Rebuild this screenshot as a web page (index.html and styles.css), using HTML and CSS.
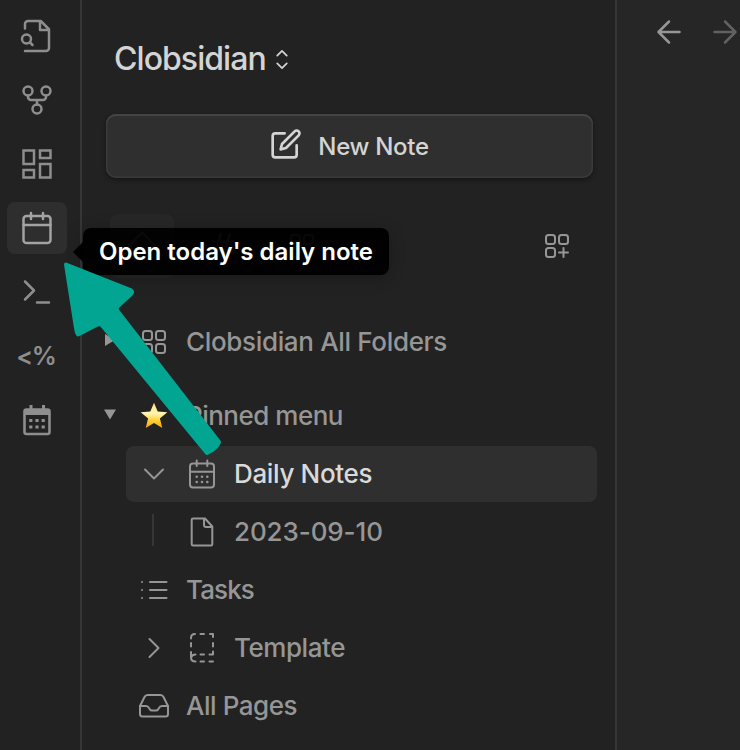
FILE: index.html
```html
<!DOCTYPE html>
<html lang="en">
<head>
<meta charset="utf-8">
<title>Clobsidian</title>
<link rel="stylesheet" href="styles.css">
</head>
<body>
<div class="app">
  <nav class="ribbon">
    <button class="action"><svg class="icon" viewBox="0 0 24 24"><path d="M4 22h14a2 2 0 0 0 2-2V7.5L14.5 2H6a2 2 0 0 0-2 2v3M14 2v6h6"/><circle cx="5" cy="14" r="3"/><path d="m9 18-1.5-1.5"/></svg></button>
    <button class="action"><svg class="icon" viewBox="0 0 24 24"><circle cx="12" cy="18" r="3"/><circle cx="6" cy="6" r="3"/><circle cx="18" cy="6" r="3"/><path d="M18 9v1a2 2 0 0 1-2 2H8a2 2 0 0 1-2-2V9M12 12v3"/></svg></button>
    <button class="action"><svg class="icon sharp" viewBox="0 0 24 24"><path d="M3 3h7v9H3zM14 3h7v5h-7zM14 12h7v9h-7zM3 16h7v5H3z"/></svg></button>
    <button class="action hovered"><svg class="icon" viewBox="0 0 24 24"><rect x="3" y="4" width="18" height="18" rx="2"/><path d="M16 2v4M8 2v4M3 10h18"/></svg></button>
    <button class="action"><svg class="icon" viewBox="0 0 24 24"><path d="m4 17 6-6-6-6M12 19h8"/></svg></button>
    <button class="action template-code">&lt;%</button>
    <button class="action"><svg class="icon" viewBox="0 0 36 36"><g stroke-width="2.6"><rect x="5.5" y="7.5" width="25" height="24.5" rx="2"/><path stroke-width="3" stroke-linecap="butt" d="M12 3v5M24.5 3v5"/></g><path class="solid" d="M5 8h26v5H5z"/><path stroke-width="3.2" stroke-linecap="butt" d="M10.2 18.500h3.200M16.400 18.500h3.200M22.600 18.500h3.200M10.200 25h3.200M16.400 25h3.200M22.600 25h3.200"/></svg></button>
  </nav>

  <aside class="sidebar">
    <header class="vault"><span class="vault-name">Clobsidian</span><svg class="sorter" viewBox="0 0 14 22"><path d="m2 7 5-5 5 5M2 15l5 5 5-5"/></svg></header>
    <button class="new-note"><svg viewBox="0 0 24 24"><path d="M11 4H4a2 2 0 0 0-2 2v14a2 2 0 0 0 2 2h14a2 2 0 0 0 2-2v-7"/><path d="M18.5 2.5a2.12 2.12 0 0 1 3 3L12 15l-4 1 1-4Z"/></svg><span>New Note</span></button>

    <div class="tabs">
      <div class="tab current"><svg class="icon" viewBox="0 0 24 24"><path d="M3 12l9-9 9 9M5 10v9a2 2 0 0 0 2 2h10a2 2 0 0 0 2-2v-9"/></svg></div>
      <div class="tab"><svg class="icon" viewBox="0 0 24 24"><path d="M5 9h14M5 15h14M11 4 7 20M17 4l-4 16"/></svg></div>
      <div class="tab"><svg class="grid-icon" viewBox="0 0 28 28"><rect x="3" y="3" width="9" height="9" rx="2.5"/><rect x="16" y="3" width="9" height="9" rx="2.5"/><rect x="3" y="16" width="9" height="9" rx="2.5"/></svg></div>
      <svg class="grid-icon add" viewBox="0 0 28 28"><rect x="3" y="3" width="9" height="9" rx="2.5"/><rect x="16" y="3" width="9" height="9" rx="2.5"/><rect x="3" y="16" width="9" height="9" rx="2.5"/><path d="M20.5 16v9M16 20.5h9"/></svg>
    </div>

    <div class="section folders"><svg class="caret" viewBox="0 0 12 14"><path class="solid" d="M1 1v12l10-6z"/></svg><svg class="grid-icon" viewBox="0 0 28 28"><rect x="3" y="3" width="9" height="9" rx="2.5"/><rect x="16" y="3" width="9" height="9" rx="2.5"/><rect x="3" y="16" width="9" height="9" rx="2.5"/><rect x="16" y="16" width="9" height="9" rx="2.5"/></svg><span class="t-folders">Clobsidian All Folders</span></div>
    <div class="section pinned"><svg class="caret" viewBox="0 0 12 14"><path class="solid" d="M0 2.500h12L6 12.500z"/></svg><svg class="grid-icon" viewBox="0 0 28 28"><defs><linearGradient id="gold" x2="0" y2="1"><stop offset="0" stop-color="#ffe173"/><stop offset=".42" stop-color="#fff5b4"/><stop offset=".68" stop-color="#ffd33b"/><stop offset="1" stop-color="#f5a400"/></linearGradient></defs><path class="star" fill="url(#gold)" d="m14 .8 3.700 8.700 9.600.7-7.400 6.200 2.400 9.500-8.300-5-8.300 5 2.400-9.500L.700 10.200l9.600-.7z"/></svg><span class="t-pinned">Pinned menu</span></div>

    <ul class="tree">
      <li class="row selected"><svg class="twisty" viewBox="0 0 28 28"><path d="m5 9.500 9 9 9-9"/></svg><svg class="row-icon" viewBox="0 0 36 36"><rect x="6" y="7.5" width="24" height="24" rx="3"/><path d="M12.700 4.500v5.500M23.300 4.500v5.500M6 15.700h24"/><path stroke-width="2.6" d="M12.700 20.700h.01M18 20.700h.01M23.300 20.700h.01M12.700 26h.01M18 26h.01M23.300 26h.01"/></svg><span class="t-daily">Daily Notes</span></li>
      <li class="row"><i class="guide"></i><svg class="row-icon" viewBox="0 0 36 36"><path d="M9 4.500h12l7.300 8v17.500q0 1.500-1.500 1.500H9Q7.700 31.500 7.700 30V5.800Q7.700 4.500 9 4.500zM20 4.500v6.500q0 2 2 2h6.300"/></svg><span class="t-date">2023-09-10</span></li>
      <li class="row"><svg class="twisty" viewBox="0 0 28 28"><path d="M2 6h.01M2 14h.01M2 22h.01M10 6h16.500M10 14h16.500M10 22h16.500"/></svg><span class="t-tasks">Tasks</span></li>
      <li class="row"><svg class="twisty" viewBox="0 0 28 28"><path d="m9.500 5 9 9-9 9"/></svg><svg class="row-icon" viewBox="0 0 36 36"><path d="M7 8.500V8q0-4 4-4M16.500 4h3.500M26 4h3v3M7 13v3.500M29 13v3.500M7 22v5.500q0 4 4.500 4M29 21.500v3h-3.500M16.500 24.500h3.500M7.500 27q.5-2.500 4-2.500M16.500 31.500h3.500M25.500 31.500h3.500"/></svg><span class="t-template">Template</span></li>
      <li class="row"><svg class="inbox" viewBox="0 0 32 28"><path d="M2 14h6q2 0 3 2l1 1.500q.5 1 2 1h4q1.500 0 2-1l1-1.500q1-2 3-2h6"/><path d="M2 14v8q0 2.500 2.500 2.500h23q2.500 0 2.500-2.500v-8L25.500 5q-1-2-3-2h-13q-2 0-3 2z"/></svg><span class="t-pages">All Pages</span></li>
    </ul>
  </aside>

  <main class="workspace">
    <svg class="icon" viewBox="0 0 24 24"><path d="m12 19-7-7 7-7M19 12H5"/></svg>
    <svg class="icon disabled" viewBox="0 0 24 24"><path d="M5 12h14M12 5l7 7-7 7"/></svg>
  </main>

  <div class="tooltip"><span>Open today's daily note</span></div>
  <svg class="pointer" viewBox="0 0 170 204"><path d="M10 8.500 L74.500 34 Q77.500 35.500 75 38 L62 50 Q59.500 52.500 61.500 55 L163 186 Q161 192 151 197 L47 70.500 Q44.500 67 40.500 69 L22 78.500 Q21 78.500 20 72 Z"/></svg>
</div>
</body>
</html>
```
FILE: styles.css
```css
* { box-sizing: border-box; }
body { margin: 0; background: #222; font-family: Inter, "Liberation Sans", sans-serif; font-weight: 450; }
button { margin: 0; padding: 0; border: 0; background: none; color: inherit; font: inherit; }
svg { display: block; flex: none; fill: none; stroke: currentColor; stroke-width: 2; stroke-linecap: round; stroke-linejoin: round; overflow: visible; }
.solid { fill: currentColor; stroke: none; }
.star { stroke: none; }
.app { position: relative; display: flex; width: 740px; height: 750px; overflow: hidden; color: #969696; }

.ribbon { flex: none; width: 82px; padding: 10px 0 0 7px; border-right: 2px solid #363636; display: flex; flex-direction: column; gap: 12px; color: #8e8e8e; }
.action { width: 60px; height: 52px; border-radius: 8px; display: flex; align-items: center; justify-content: center; }
.hovered { background: #2e2e2e; color: #a3a3a3; }
.icon { width: 36px; height: 36px; stroke-width: 1.65; }
.sharp { stroke-linejoin: miter; }
.template-code { padding: 0 2px 0 0; font-size: 25px; font-weight: 600; letter-spacing: -1.2px; }

.sidebar { flex: none; width: 535px; border-right: 2px solid #363636; }
.vault { height: 114px; padding: 4px 0 0 32px; display: flex; align-items: center; gap: 9px; color: #d4d4d4; }
.vault-name { font-size: 32px; line-height: 40px; letter-spacing: -.95px; }
.sorter { width: 14px; height: 21px; stroke-width: 1.8; }
.new-note { width: 487px; height: 64px; margin-left: 24px; padding: 0 0 4px; border-radius: 10px; background: #2f2f2f; box-shadow: inset 0 2px 1px #454545, inset 0 0 0 1.5px #3a3a3a, 0 2px 4px #151515; display: flex; align-items: center; justify-content: center; gap: 16px; color: #d4d4d4; font-size: 24px; letter-spacing: -.3px; }
.new-note svg { width: 32px; height: 32px; }
.new-note span { padding-top: 4px; }

.tabs { height: 64px; margin: 36px 44px 0 28px; display: flex; align-items: center; gap: 16px; }
.tab { width: 64px; height: 64px; border-radius: 8px; display: grid; place-items: center; }
.current { background: #272727; }
.grid-icon { width: 28px; height: 28px; }
.add { margin-left: auto; }

.section { height: 56px; padding-left: 22px; display: flex; align-items: center; font-size: 26px; }
.section span, .row span { padding-bottom: 1px; }
.caret { width: 12px; height: 14px; margin-right: 24px; }
.grid-icon + span { margin-left: 18px; }
.folders { margin-top: 36px; letter-spacing: -.34px; }
.folders .caret { transform: translateY(-2px); }
.pinned { margin-top: 18px; letter-spacing: -.5px; }
.pinned .caret { transform: translateY(-2px); }

.tree { list-style: none; margin: 2px 18px 0 44px; padding: 0; display: flex; flex-direction: column; gap: 2px; }
.row { height: 56px; padding-left: 14px; display: flex; align-items: center; border-radius: 8px; font-size: 26px; letter-spacing: -.45px; }
.selected { background: #2f2f2f; }
.selected span { color: #dadada; letter-spacing: -.35px; }
.t-date { letter-spacing: -.1px; }
.t-tasks { letter-spacing: -.9px; }
.twisty { width: 28px; height: 28px; }
.twisty + span { margin-left: 18px; }
.row-icon { width: 36px; height: 36px; margin: 0 14px 0 16px; }
.guide { width: 2px; height: 32px; margin: 0 14px 4px 12px; background: #363636; }
.inbox { width: 32px; height: 28px; margin: 0 16px 0 -2px; }

.workspace { flex: 1; min-width: 0; padding: 14px 0 0 34px; background: #262626; display: flex; gap: 20px; }
.disabled { color: #616161; }

.tooltip { position: absolute; left: 83px; top: 228px; width: 306px; height: 47px; padding-left: 16px; border-radius: 8px; background: rgba(0, 0, 0, .95); box-shadow: 0 3px 16px rgba(0, 0, 0, .25); display: flex; align-items: center; color: #fff; font-size: 24px; font-weight: 600; white-space: nowrap; }
.tooltip::before { content: ""; position: absolute; left: -10px; top: 14px; border: 10px solid transparent; border-left-width: 0; border-right-color: #000; }
.pointer { position: absolute; left: 56px; top: 256px; width: 170px; height: 204px; color: #02a591; fill: currentColor; stroke-width: 4; }
```
